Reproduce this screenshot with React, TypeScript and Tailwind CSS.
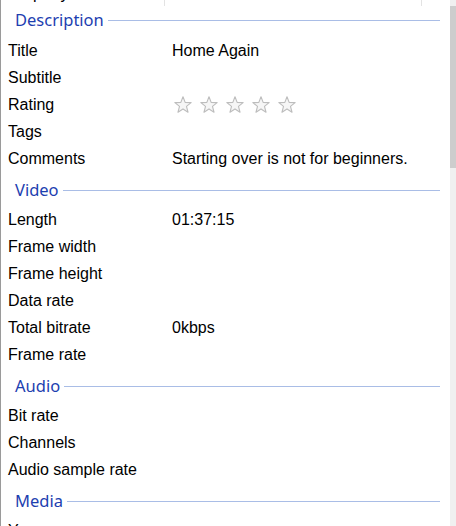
import React from 'react';

type Row = { label: string; value?: string; stars?: boolean };
type Group = { title: string; rows: Row[] };

const groups: Group[] = [
    {
        title: 'Description',
        rows: [
            { label: 'Title', value: 'Home Again' },
            { label: 'Subtitle' },
            { label: 'Rating', stars: true },
            { label: 'Tags' },
            { label: 'Comments', value: 'Starting over is not for beginners.' },
        ],
    },
    {
        title: 'Video',
        rows: [
            { label: 'Length', value: '01:37:15' },
            { label: 'Frame width' },
            { label: 'Frame height' },
            { label: 'Data rate' },
            { label: 'Total bitrate', value: '0kbps' },
            { label: 'Frame rate' },
        ],
    },
    {
        title: 'Audio',
        rows: [
            { label: 'Bit rate' },
            { label: 'Channels' },
            { label: 'Audio sample rate' },
        ],
    },
    {
        title: 'Media',
        rows: [{ label: 'Year' }],
    },
];

function Star() {
    return (
        <svg width="18" height="17" viewBox="0 0 24 23" className="shrink-0">
            <polygon
                points="12,1 14.9,8.6 23,9 16.7,14.1 18.8,22 12,17.5 5.2,22 7.3,14.1 1,9 9.1,8.6"
                fill="#f6f6f6"
                stroke="#bdbdbd"
                strokeWidth="1.5"
                strokeLinejoin="round"
            />
        </svg>
    );
}

function GroupHeader({ title, first }: { title: string; first: boolean }) {
    return (
        <div className={`flex items-center pl-[14px] pr-[10px] ${first ? 'h-[31px] pb-[3px]' : 'h-[34px] pt-[3px]'}`}>
            <span className="text-[16.5px] leading-none text-[#1d40b0] font-['Noto_Sans',sans-serif]">{title}</span>
            <div className="ml-[4px] flex-1 h-px bg-[#a9bde6]" />
        </div>
    );
}

export default function App() {
    return (
        <div className="w-[456px] h-[526px] overflow-hidden bg-white flex font-['Liberation_Sans',Arial,sans-serif] text-black">
            <div className="w-px shrink-0 bg-[#9a9a9a]" />
            <div className="flex-1 flex flex-col overflow-hidden">
                {/* column header, scrolled mostly out of view */}
                <div className="h-[24px] -mt-[18px] shrink-0 flex text-[16px]">
                    <div className="w-[164px] pl-[7px] flex items-center border-r border-[#e3e3e3]">Property</div>
                    <div className="w-[257px] pl-[6px] flex items-center border-r border-[#e3e3e3]">Value</div>
                    <div className="flex-1" />
                </div>
                {groups.map((g, gi) => (
                    <div key={g.title} className="flex flex-col">
                        <GroupHeader title={g.title} first={gi === 0} />
                        {g.rows.map((r) => (
                            <div key={r.label} className="h-[27px] shrink-0 flex items-center text-[16px]">
                                <div className="w-[171px] pl-[7px] whitespace-nowrap">{r.label}</div>
                                {r.stars ? (
                                    <div className="flex gap-[8px] ml-[2px]">
                                        <Star />
                                        <Star />
                                        <Star />
                                        <Star />
                                        <Star />
                                    </div>
                                ) : (
                                    <div className="whitespace-nowrap">{r.value}</div>
                                )}
                            </div>
                        ))}
                    </div>
                ))}
            </div>
            <div className="w-[6px] shrink-0 bg-[#f0f0f0] pt-[6px]">
                <div className="h-[162px] bg-[#cdcdcd]" />
            </div>
        </div>
    );
}
